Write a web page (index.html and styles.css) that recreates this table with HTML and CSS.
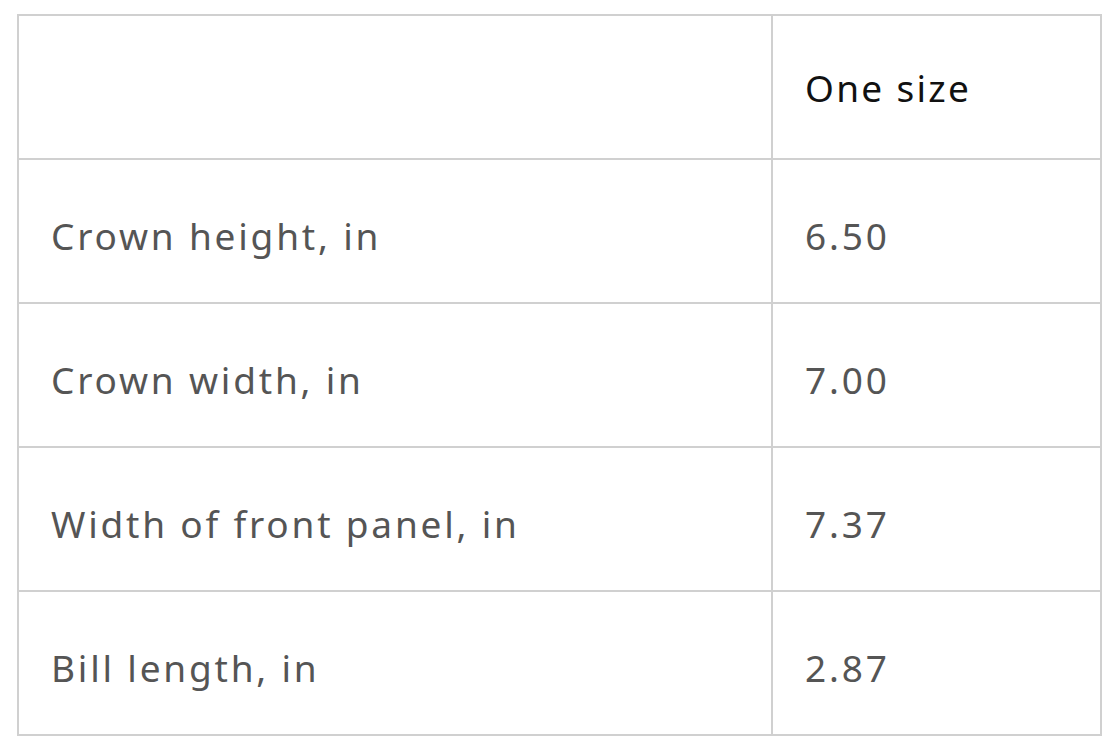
FILE: index.html
```html
<!DOCTYPE html>
<html>
<head>
<meta charset="utf-8">
<link rel="stylesheet" href="styles.css">
</head>
<body>
<table class="size-table">
  <thead>
    <tr><th class="label"></th><th class="value head">One size</th></tr>
  </thead>
  <tbody>
    <tr><td class="label">Crown height, in</td><td class="value">6.50</td></tr>
    <tr><td class="label">Crown width, in</td><td class="value">7.00</td></tr>
    <tr><td class="label">Width of front panel, in</td><td class="value">7.37</td></tr>
    <tr><td class="label">Bill length, in</td><td class="value">2.87</td></tr>
  </tbody>
</table>
</body>
</html>
```
FILE: styles.css
```css
html, body { background: #fff; }
body {
  margin: 14px 0 0 17px;
  font-family: "Noto Sans", "Open Sans", sans-serif;
}
.size-table {
  border-collapse: collapse;
  width: 1085px;
  table-layout: fixed;
}
.size-table th, .size-table td {
  border: 2px solid #d0d0d0;
  height: 144px;
  padding: 8px 0 0 32px;
  text-align: left;
  vertical-align: middle;
  font-size: 37px;
  letter-spacing: 2.8px;
  font-weight: 400;
  color: #555;
  box-sizing: border-box;
}
.size-table .label { width: 754px; }
.size-table th.head {
  color: #111;
  padding-top: 0;
  letter-spacing: 2.3px;
}
```
